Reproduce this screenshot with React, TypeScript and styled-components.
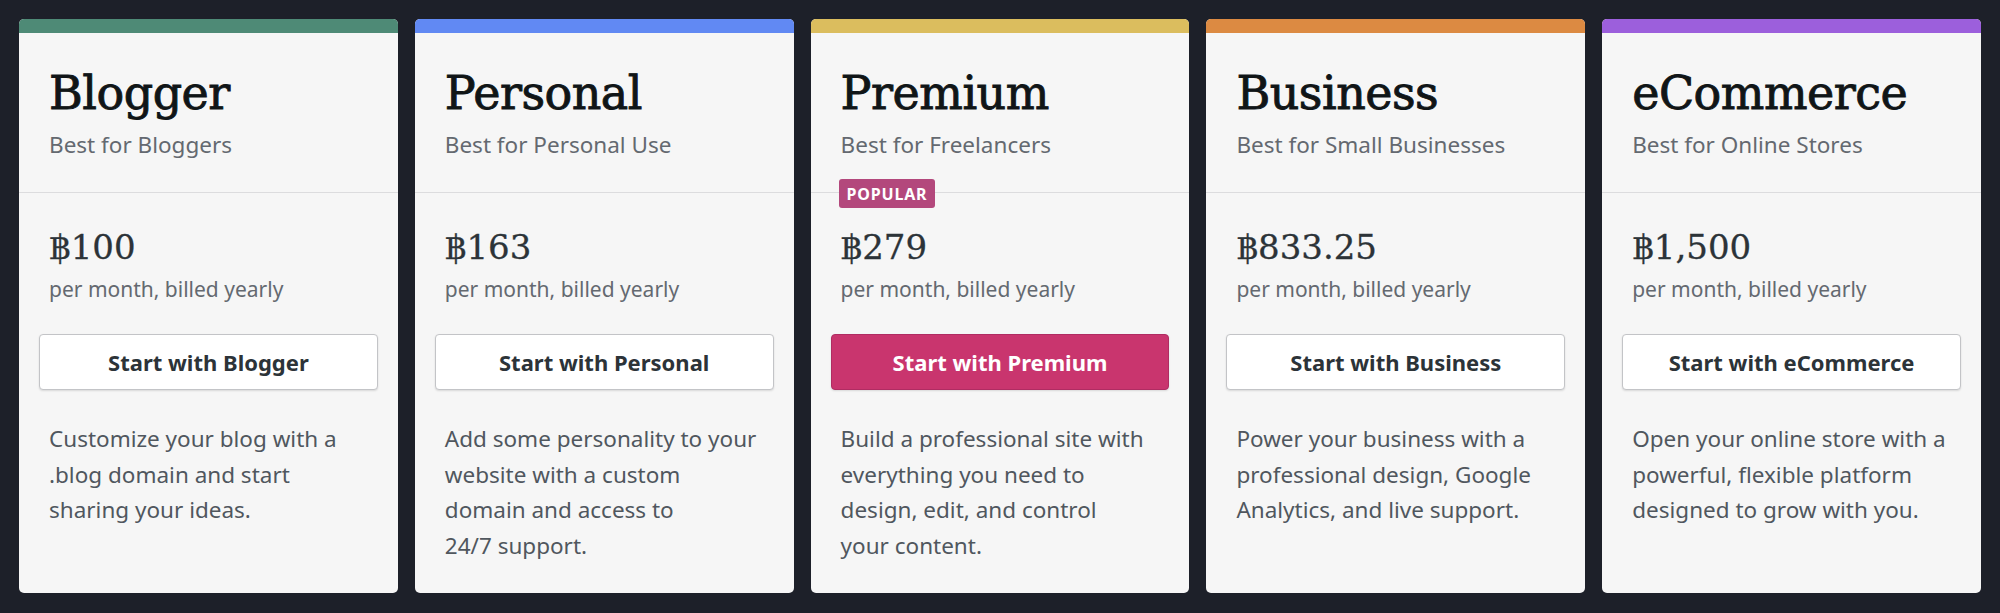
import styled, { createGlobalStyle } from "styled-components";

const GlobalStyle = createGlobalStyle`
  html, body {
    margin: 0;
    padding: 0;
    background: #1d2029;
  }
  * {
    box-sizing: border-box;
  }
`;

const Page = styled.div`
  display: flex;
  gap: 17px;
  height: 613px;
  padding: 19px 19px 20px;
  background: #1d2029;
  font-family: "Noto Sans", "Open Sans", sans-serif;
`;

const Card = styled.div`
  position: relative;
  flex: 1;
  display: flex;
  flex-direction: column;
  background: #f6f6f6;
  border-radius: 5px;
  overflow: hidden;
`;

const Bar = styled.div<{ $color: string }>`
  height: 14px;
  background: ${p => p.$color};
`;

const Head = styled.div`
  padding: 33px 30px 32px;
  border-bottom: 1px solid #dcdcde;
`;

const Title = styled.h2`
  margin: 0;
  font-family: "DejaVu Serif", "Liberation Serif", serif;
  font-weight: 400;
  font-size: 46px;
  line-height: 55px;
  letter-spacing: -0.5px;
  color: #101517;
  -webkit-text-stroke: 0.9px #101517;
`;

const Subtitle = styled.div`
  margin-top: 9px;
  font-size: 22.5px;
  line-height: 30px;
  color: #646970;
`;

const Body = styled.div`
  position: relative;
  padding: 34px 30px 0;
`;

const Badge = styled.span`
  position: absolute;
  top: -14px;
  left: 28px;
  height: 29px;
  padding: 0 8px;
  display: flex;
  align-items: center;
  background: #b3487c;
  color: #fff;
  border-radius: 3px;
  font-size: 16px;
  font-weight: 700;
  letter-spacing: 0.8px;
`;

const Price = styled.div`
  font-family: "DejaVu Serif", "Liberation Serif", serif;
  font-size: 34px;
  line-height: 40px;
  color: #2c3338;
  -webkit-text-stroke: 0.3px #2c3338;
`;

const Period = styled.div`
  margin-top: 8px;
  font-size: 21px;
  line-height: 28px;
  color: #646970;
`;

const Button = styled.button<{ $primary?: boolean }>`
  display: block;
  width: calc(100% + 20px);
  margin: 31px -10px 0;
  height: 56px;
  border-radius: 4px;
  border: 1px solid ${p => (p.$primary ? "#b02c62" : "#c3c4c7")};
  background: ${p => (p.$primary ? "#c9356e" : "#fff")};
  color: ${p => (p.$primary ? "#fff" : "#2c3338")};
  box-shadow: 0 1px 2px rgba(0, 0, 0, 0.12);
  font-family: "Noto Sans", "Open Sans", sans-serif;
  font-size: 22px;
  font-weight: 700;
  cursor: pointer;
`;

const Description = styled.p`
  margin: 31px 0 0;
  font-size: 22.5px;
  line-height: 35.5px;
  color: #50575e;
`;

const plans = [
  {
    name: "Blogger",
    tagline: "Best for Bloggers",
    price: "฿100",
    color: "#4e8a76",
    text: ["Customize your blog with a", ".blog domain and start", "sharing your ideas."],
  },
  {
    name: "Personal",
    tagline: "Best for Personal Use",
    price: "฿163",
    color: "#6189f3",
    text: ["Add some personality to your", "website with a custom", "domain and access to", "24/7 support."],
  },
  {
    name: "Premium",
    tagline: "Best for Freelancers",
    price: "฿279",
    color: "#dbbd5e",
    popular: true,
    text: ["Build a professional site with", "everything you need to", "design, edit, and control", "your content."],
  },
  {
    name: "Business",
    tagline: "Best for Small Businesses",
    price: "฿833.25",
    color: "#dc8a42",
    text: ["Power your business with a", "professional design, Google", "Analytics, and live support."],
  },
  {
    name: "eCommerce",
    tagline: "Best for Online Stores",
    price: "฿1,500",
    color: "#9c5fdc",
    text: ["Open your online store with a", "powerful, flexible platform", "designed to grow with you."],
  },
];

const App = () => {
  return (
    <>
      <GlobalStyle />
      <Page>
        {plans.map(plan => (
          <Card key={plan.name}>
            <Bar $color={plan.color} />
            <Head>
              <Title>{plan.name}</Title>
              <Subtitle>{plan.tagline}</Subtitle>
            </Head>
            <Body>
              {plan.popular && <Badge>POPULAR</Badge>}
              <Price>{plan.price}</Price>
              <Period>per month, billed yearly</Period>
              <Button $primary={plan.popular}>Start with {plan.name}</Button>
              <Description>
                {plan.text.map((line, i) => (
                  <span key={i}>
                    {line}
                    {i < plan.text.length - 1 && <br />}
                  </span>
                ))}
              </Description>
            </Body>
          </Card>
        ))}
      </Page>
    </>
  );
};

export default App;
